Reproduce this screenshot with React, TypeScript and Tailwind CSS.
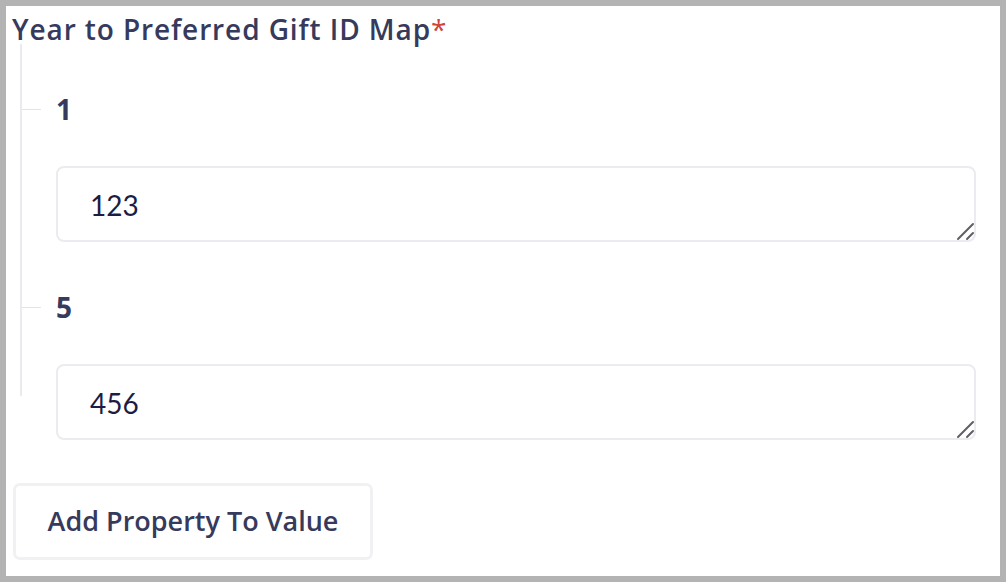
import React from 'react';

const entries = [
  { key: '1', value: '123' },
  { key: '5', value: '456' },
];

const Grabber: React.FC = () => (
  <svg className="absolute right-[1px] bottom-[1px] pointer-events-none" width="20" height="20" viewBox="0 0 20 20">
    <path d="M3 18 L18 3 M12 18 L18 12" stroke="#5f5f66" strokeWidth="2" strokeLinecap="round" />
  </svg>
);

const App: React.FC = () => {
  return (
    <div className="w-[1006px] h-[582px] border-[6px] border-[#b3b3b3] bg-white font-['Open_Sans',sans-serif] text-[#363a5c] overflow-hidden">
      <div className="pl-[6px] pt-[8px]">
        <h2 className="text-[28px] leading-[30px] font-semibold tracking-[0.9px]">
          Year to Preferred Gift ID Map<span className="text-[#d0423a] font-medium">*</span>
        </h2>

        <div className="relative ml-[8px] w-[962px]">
          <span className="absolute left-0 top-0 w-[2px] h-[352px] bg-[#eaebef]" />
          {entries.map((e) => (
            <div key={e.key} className="pt-[49px] [&:not(:first-child)]:pt-[53px]">
              <div className="flex items-center h-[24px]">
                <span className="w-[21px] h-[1px] bg-[#e3e4ea]" />
                <span className="ml-[15px] text-[28px] leading-[24px] font-bold">{e.key}</span>
              </div>
              <div className="relative mt-[45px] ml-[36px] w-[920px] h-[76px]">
                <textarea
                  defaultValue={e.value}
                  rows={1}
                  className="block w-full h-full rounded-[8px] border-2 border-[#ebebf0] pl-[32px] pt-[20px] font-['Lato',sans-serif] text-[28px] leading-[34px] text-[#1c1d45] outline-none resize-none"
                />
                <Grabber />
              </div>
            </div>
          ))}
        </div>

        <button className="mt-[43px] ml-[1px] w-[360px] h-[77px] rounded-[7px] border-[3px] border-[#f1f1f4] bg-white text-[27px] font-semibold text-[#363a5c]">
          Add Property To Value
        </button>
      </div>
    </div>
  );
};

export default App;
